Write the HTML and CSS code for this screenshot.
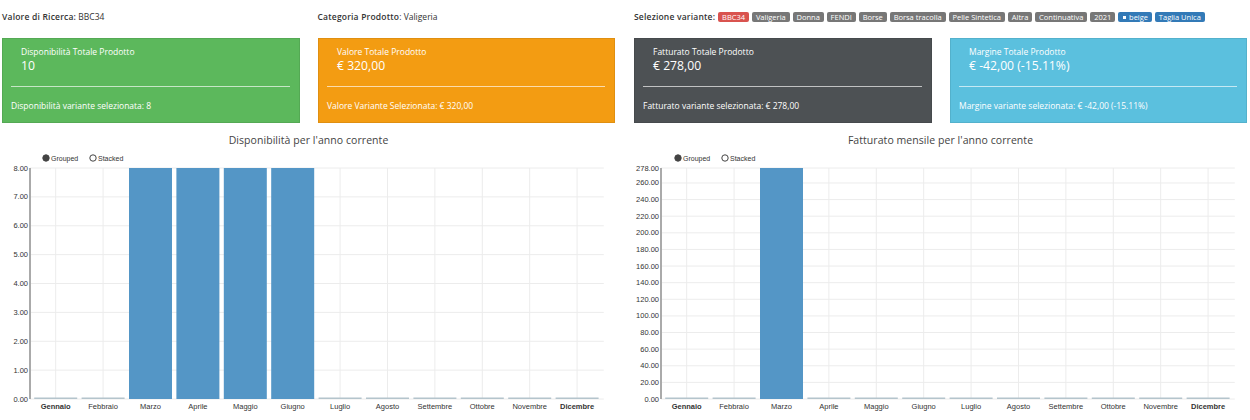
FILE: index.html
```html
<!DOCTYPE html>
<html lang="it">
<head>
    <meta charset="UTF-8">
    <title>Riepilogo Prodotto</title>
    <link rel="stylesheet" href="styles.css">
</head>
<body>
    <div class="page">
        <div class="column">
            <div class="info-row">
                <div class="info-cell"><strong>Valore di Ricerca:</strong> BBC34</div>
                <div class="info-cell"><strong>Categoria Prodotto</strong>: Valigeria</div>
            </div>
            <div class="cards">
                <div class="card card-green">
                    <div class="card-title">Disponibilità Totale Prodotto</div>
                    <div class="card-value">10</div>
                    <hr>
                    <div class="card-foot">Disponibilità variante selezionata: 8</div>
                </div>
                <div class="card card-orange">
                    <div class="card-title">Valore Totale Prodotto</div>
                    <div class="card-value">€ 320,00</div>
                    <hr>
                    <div class="card-foot">Valore Variante Selezionata: € 320,00</div>
                </div>
            </div>
            <h3 class="chart-title">Disponibilità per l'anno corrente</h3>
            <div class="chart" id="chart-disponibilita"></div>
        </div>

        <div class="column">
            <div class="info-row">
                <div class="info-cell variant">
                    <strong>Selezione variante:</strong>
                    <span class="tag tag-red">BBC34</span>
                    <span class="tag">Valigeria</span>
                    <span class="tag">Donna</span>
                    <span class="tag">FENDI</span>
                    <span class="tag">Borse</span>
                    <span class="tag">Borsa tracolla</span>
                    <span class="tag">Pelle Sintetica</span>
                    <span class="tag">Altra</span>
                    <span class="tag">Continuativa</span>
                    <span class="tag">2021</span>
                    <span class="tag tag-blue"><span class="swatch"></span>beige</span>
                    <span class="tag tag-blue">Taglia Unica</span>
                </div>
            </div>
            <div class="cards">
                <div class="card card-dark">
                    <div class="card-title">Fatturato Totale Prodotto</div>
                    <div class="card-value">€ 278,00</div>
                    <hr>
                    <div class="card-foot">Fatturato variante selezionata: € 278,00</div>
                </div>
                <div class="card card-blue">
                    <div class="card-title">Margine Totale Prodotto</div>
                    <div class="card-value">€ -42,00 (-15.11%)</div>
                    <hr>
                    <div class="card-foot">Margine variante selezionata: € -42,00 (-15.11%)</div>
                </div>
            </div>
            <h3 class="chart-title">Fatturato mensile per l'anno corrente</h3>
            <div class="chart" id="chart-fatturato"></div>
        </div>
    </div>

    <script src="charts.js"></script>
</body>
</html>
```

FILE: styles.css
```css
* {
    margin: 0;
    padding: 0;
    box-sizing: border-box;
}

html,
body {
    height: 420px;
    overflow: hidden;
}

body {
    font-family: "Open Sans", Arial, sans-serif;
    background: white;
    color: #333;
}

.page {
    display: grid;
    grid-template-columns: 613px 613px;
    gap: 19px;
    padding: 0 3px 0 2px;
}

.info-row {
    display: grid;
    grid-template-columns: 1fr 1fr;
    gap: 18px;
    height: 38px;
    padding-top: 11px;
    font-size: 8.5px;
    line-height: 12px;
}

.info-cell strong {
    font-weight: 600;
    letter-spacing: 0.2px;
}

.variant {
    grid-column: 1 / 3;
    display: flex;
    align-items: center;
    align-self: start;
    gap: 3px;
}

.tag {
    display: inline-flex;
    align-items: center;
    height: 10px;
    padding: 0 3.9px;
    border-radius: 2px;
    background: #777;
    color: white;
    font-size: 7.5px;
    white-space: nowrap;
}

.tag-red {
    background: #d9534f;
}

.tag-blue {
    background: #337ab7;
}

.swatch {
    width: 3px;
    height: 3px;
    margin: 0 3px 0 1px;
    background: white;
}

.cards {
    display: grid;
    grid-template-columns: 298px 297px;
    gap: 18px;
    height: 85px;
}

.card {
    padding: 0 9px 0 8px;
    color: white;
    border: 1px solid rgba(0,0,0,0.08);
}

.card-green {
    background: #5cb85c;
}

.card-orange {
    background: #f39c12;
}

.card-dark {
    background: #4d5154;
}

.card-blue {
    background: #5bc0de;
}

.card-title {
    margin: 6px 0 0 10px;
    font-size: 8.5px;
    line-height: 13px;
}

.card-value {
    margin: -1px 0 0 10px;
    font-size: 12.2px;
    line-height: 17px;
}

.card hr {
    margin-top: 12px;
    border: none;
    border-top: 1px solid rgba(255,255,255,0.65);
}

.card-foot {
    margin-top: 12px;
    font-size: 8.5px;
    line-height: 13px;
}

.chart-title {
    margin-top: 10px;
    font-size: 10.5px;
    font-weight: 400;
    line-height: 15px;
    letter-spacing: 0.06px;
    text-align: center;
    color: #444;
}

.chart {
    height: 270px;
}

.chart svg {
    display: block;
}

.chart text {
    font-family: "Liberation Sans", Arial, sans-serif;
    font-size: 7.5px;
    fill: #333;
}

.chart .tick-strong {
    font-weight: bold;
}

.chart .legend-label {
    font-size: 7px;
}

.grid-line {
    stroke: #ececec;
    stroke-width: 1;
}

.axis-line {
    stroke: #aaa;
    stroke-width: 2;
}

.bar {
    fill: #5496c6;
}

.bar-empty {
    fill: #b4c4cc;
}

.legend-on {
    fill: #444;
    stroke: #444;
}

.legend-off {
    fill: white;
    stroke: #444;
}
```

FILE: charts.js
```js
const MESI = ['Gennaio', 'Febbraio', 'Marzo', 'Aprile', 'Maggio', 'Giugno', 'Luglio', 'Agosto', 'Settembre', 'Ottobre', 'Novembre', 'Dicembre'];

// altezze e passi in pixel
const TOP = 20;
const BOTTOM = 251;
const STEP = 47.4;
const BAR_W = 43;

function disegnaGrafico(id, axisX, max, ticks, valori) {
    const bandStart = axisX + 2;
    const right = bandStart + STEP * 12 + 3;
    const y = v => BOTTOM - (v / max) * (BOTTOM - TOP);
    let svg = `<svg width="613" height="270" viewBox="0 0 613 270">`;

    ticks.forEach(t => {
        svg += `<line class="grid-line" x1="${axisX}" x2="${right}" y1="${y(t)}" y2="${y(t)}"/>`;
        svg += `<text x="${axisX - 2}" y="${y(t) + 2.5}" text-anchor="end">${t.toFixed(2)}</text>`;
    });

    MESI.forEach((mese, i) => {
        const cx = bandStart + STEP * i + STEP / 2;
        const cls = i === 0 || i === 11 ? 'tick-strong' : '';
        svg += `<line class="grid-line" x1="${cx}" x2="${cx}" y1="${TOP}" y2="${BOTTOM}"/>`;
        if (valori[i] > 0) {
            svg += `<rect class="bar" x="${cx - BAR_W / 2}" y="${y(valori[i])}" width="${BAR_W}" height="${BOTTOM - y(valori[i])}"/>`;
        } else {
            svg += `<rect class="bar-empty" x="${cx - BAR_W / 2}" y="${BOTTOM - 1.5}" width="${BAR_W}" height="1.5"/>`;
        }
        svg += `<text class="${cls}" x="${cx}" y="${BOTTOM + 10}" text-anchor="middle">${mese}</text>`;
    });

    svg += `<line class="axis-line" x1="${axisX}" x2="${axisX}" y1="${TOP}" y2="${BOTTOM}"/>`;

    // legenda Grouped / Stacked
    svg += `<circle class="legend-on" cx="44" cy="10" r="3.2"/>`;
    svg += `<text class="legend-label" x="49" y="12.5">Grouped</text>`;
    svg += `<circle class="legend-off" cx="91" cy="10" r="3.2"/>`;
    svg += `<text class="legend-label" x="96" y="12.5">Stacked</text>`;

    document.getElementById(id).innerHTML = svg + '</svg>';
}

disegnaGrafico('chart-disponibilita', 28, 8, [0, 1, 2, 3, 4, 5, 6, 7, 8], [0, 0, 8, 8, 8, 8, 0, 0, 0, 0, 0, 0]);

const ticksFatturato = [];
for (let t = 0; t <= 260; t += 20) {
    ticksFatturato.push(t);
}
ticksFatturato.push(278);
disegnaGrafico('chart-fatturato', 27, 278, ticksFatturato, [0, 0, 278, 0, 0, 0, 0, 0, 0, 0, 0, 0]);
```
